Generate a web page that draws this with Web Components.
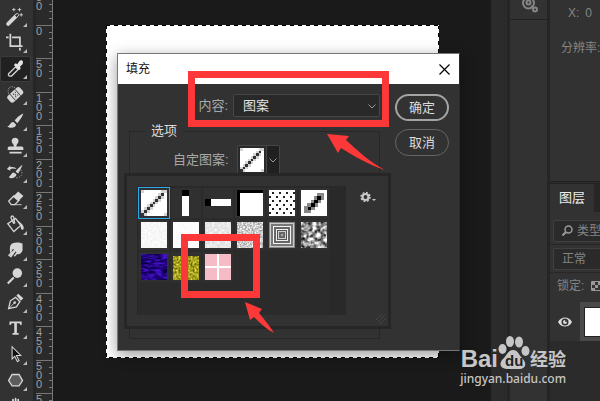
<!DOCTYPE html>
<html lang="zh-CN">
<head>
<meta charset="utf-8">
<title>填充</title>
<style>
    html, body {
        height: 100%;
        margin: 0;
        overflow: hidden;
    }

    body {
        background: #1a1a1a;
        color: #dcdcdc;
        font: 13px/16px "Liberation Sans", "Noto Sans CJK SC", sans-serif;
    }
</style>
</head>
<body>
<photo-editor></photo-editor>

<script>
    // Attach an open shadow root and fill it
    const render = (el, html) => {
        el.attachShadow({ mode: 'open' }).innerHTML = html;
    };

    const TOOLS = [
        ['魔棒', '<path d="M2.500 19.500 12 10" stroke="#d6d6d6" stroke-width="4.500" stroke-linecap="round"/><path d="m10 10 3-3 2 2-3 3z" fill="#323232" stroke="#d6d6d6"/><path d="M9 1v4M7 3h4M15.500 1v4M13.500 3h4M17.500 7v4M15.500 9h4" stroke="#d6d6d6"/>'],
        ['裁剪', '<path d="M0 5h3M5 1v14h14M7 5h9v9M16 17v3" stroke="#d6d6d6" stroke-width="2"/>'],
        ['吸管', '<path d="M3.500 19.500C2 18.500 3 16.500 4 16l7-7 3 3-7 7c-1 1-2 1-3.500.500z" stroke="#d6d6d6" stroke-width="1.500"/><path d="m9 7 2-2 2 1 2-3c2-3 6-1 4 3l-3 3 1 2-2 2z" fill="#e2e2e2"/>'],
        ['修复画笔', '<path d="M10 3C5 0 1 4 3 10" stroke="#d6d6d6" stroke-dasharray="1 1.500"/><g transform="rotate(-42 11 11)"><rect x="1" y="6" width="19" height="10" rx="3" fill="#d6d6d6"/><path d="M6.500 6v10M14.500 6v10" stroke="#323232"/><path d="M9 9h1M12 9h1M9 13h1M12 13h1M10 11h1" stroke="#323232" stroke-width="1.500"/></g>'],
        ['画笔', '<path d="M20 3c-3 1-8 5-10 8l3 3c3-3 6-8 7-11zM8.500 12.500c-4 0-3 4-7 5 3 3 10 2 10-2z" fill="#d6d6d6"/>'],
        ['仿制图章', '<path d="M8 8c-3-3-1-7 2.500-7s5.500 4 2.500 7c-1 1-1 2-1 3h6c2 0 2 1 2 4H2c0-3 0-4 2-4h5c0-1 0-2-1-3zM4 17h14v2H4z" fill="#d6d6d6"/>'],
        ['历史记录画笔', '<path d="M19 2c-3 2-6 5-8 8l3 2c2-3 4-7 5-10zM9 11c-3 0-3 4-6 5 3 3 9 1 9-3zM1 7l4-4v2c3-1 6 0 7 2-3-1-5-1-7 0v2z" fill="#d6d6d6"/><path d="M17 8c3 3 1 9-5 9" stroke="#d6d6d6" stroke-dasharray="1 2"/>'],
        ['橡皮擦', '<path d="m3 14 6-6 6 5-5 5H6z" stroke="#d6d6d6" stroke-width="1.500"/><path d="m8 9 6-6 6 5-6 6z" fill="#d6d6d6"/><path d="M9 18h9" stroke="#d6d6d6"/>'],
        ['油漆桶', '<path d="m2 10 9-6 6 8-8 7z" stroke="#d6d6d6" stroke-width="1.500"/><path d="M9 10 6 4c-1-3 2-4 3-1l1 7" stroke="#d6d6d6" stroke-width="1.500"/><path d="m12 5 6 5c3 3 3 7 1 7s-2-2-2-5z" fill="#d6d6d6"/>'],
        ['涂抹', '<path d="M5 14c-1-4-1-9 2-11 5-2 9-1 12 0v8c-1 3-4 5-6 4l-3 3-1-1 3-4-1-1-5 7-2-1 5-8-1-1z" fill="#d6d6d6"/><path d="m8 12-5 5" stroke="#d6d6d6" stroke-width="2"/>'],
        ['减淡', '<circle cx="13" cy="7" r="5.500" fill="#d6d6d6"/><path d="m9 12-7 7" stroke="#d6d6d6" stroke-width="2.500"/>'],
        ['钢笔', '<path d="m3 18 2-9 6-4 5 5-4 6z" stroke="#d6d6d6" stroke-width="1.500"/><path d="m3 18 7-7" stroke="#d6d6d6"/><circle cx="10" cy="11" r="1.500" fill="#d6d6d6"/><path d="m12 3 2-2 6 5-3 3z" fill="#d6d6d6"/>'],
        ['文字', '<path d="M4 3h14v4h-1.500l-1-2h-3v11h2v2H7.500v-2h2V5h-3l-1 2H4z" fill="#d6d6d6"/>'],
        ['路径选择', '<path d="M7 2v14l3-3 3 6 2-1-3-6h5z" fill="#111" stroke="#d6d6d6" stroke-width="1.200"/>'],
        ['多边形', '<path d="M7 4h8l4 7-4 6H7l-4-6z" fill="#5c5c5c" stroke="#d6d6d6" stroke-width="1.500"/>'],
        ['抓手', '<path d="M5 7v6M8 3v10M11 2v11M14 3v10M17 6v7" stroke="#d6d6d6" stroke-width="2" stroke-linecap="round"/>'],
    ];

    // Grainy swatch made from turbulence; slope and shift set its contrast per channel
    const grain = (id, freq, slope, shift) => `
        <filter id="${id}" x="0" y="0" width="1" height="1" color-interpolation-filters="sRGB">
            <feTurbulence type="fractalNoise" baseFrequency="${freq}" numOctaves="2" seed="4"/>
            <feColorMatrix values="${slope.map((s, i) => `${s} 0 0 0 ${shift[i]}`).join(' ')} 0 0 0 0 1"/>
        </filter>
        <rect width="26" height="26" filter="url(#${id})"/>`;

    // Unit squares at the given [x, y] places
    const cells = (places, fill) => `<path fill="${fill}" d="${places.map(([x, y]) => `M${x} ${y}h1v1h-1z`).join('')}"/>`;
    const STEPS = [0, 1, 2, 3, 4, 5, 6, 7];

    const PATTERNS = {
        diagonal: [9, `<path d="M0 0h9v9H0z" fill="#fff"/>${
            cells([[0, 0], [8, 0], [8, 8], ...STEPS.map(i => [i, 7 - i]), ...STEPS.slice(1).map(i => [i, 9 - i])], '#d4d4d4')}${
            cells(STEPS.map(i => [i, 8 - i]), '#333')}`],
        column: [26, '<path d="M9 0h7v6H9z" fill="#000"/><path d="M9 6h7v20H9z" fill="#fff"/>'],
        row: [26, '<path d="M0 9h6v7H0z" fill="#000"/><path d="M6 9h20v7H6z" fill="#fff"/>'],
        corner: [26, '<path d="M0 0h26v26H0z" fill="#000"/><path d="M3 3h23v23H3z" fill="#fff"/>'],
        dots: [26, `<path d="M0 0h26v26H0z" fill="#fff"/><path fill="#222" d="${
            [2, 6, 10, 14, 18, 22].map((y, r) => [2, 9, 16, 23].map(x => `M${x + (r % 2 ? -2 : 1)} ${y}h2v2h-2z`).join('')).join('')}"/>`],
        stroke: [26, '<path d="M0 0h26v26H0z" fill="#fff"/><path d="M16 3h7v7h-3v3h-3v4h-3v3h-4v3H3v-7h3v-3h4v-3h3V6h3z" fill="#888"/><path d="M16 6h4v4h-3v3h-3v4h-4v3H7v-3h3v-4h3v-3h3z" fill="#000"/>'],
        paper: [26, grain('g', '.5', [.12, .12, .12], [.91, .91, .91])],
        rice: [26, grain('g', '.8', [.08, .08, .08], [.95, .95, .95])],
        felt: [26, grain('g', '.4', [.2, .2, .2], [.81, .81, .81])],
        stone: [26, grain('g', '.6', [.8, .8, .8], [.4, .4, .4])],
        rings: [26, `<path d="M0 0h26v26H0z" fill="#888"/>${
            [['#ccc', 1], ['#777', 2], ['#f4f4f4', 4], ['#666', 5], ['#eee', 7], ['#555', 8], ['#ccc', 9], ['#666', 10], ['#aaa', 12]]
                .map(([c, n]) => `<rect x="${n}" y="${n}" width="${26 - 2 * n}" height="${26 - 2 * n}" fill="${c}"/>`).join('')}`],
        lace: [26, grain('g', '.25', [1.7, 1.7, 1.7], [-.25, -.25, -.25])],
        violet: [26, grain('g', '.14 .45', [.5, .2, 1.1], [-.1, -.08, -.02])],
        moss: [26, '<svg y="2" width="26" height="21">' + grain('g', '.5', [1, 1, .4], [.15, .13, -.08]) + '</svg>'],
        tiles: [26, '<path d="M0 0h26v26H0z" fill="#f5bcc8"/><path d="M12 0h2v26h-2zM0 12h26v2H0z" fill="#fff"/>'],
    };

    class PhotoEditor extends HTMLElement {
        connectedCallback() {
            render(this, `
                <style>
                    :host {
                        display: grid;
                        grid-template-columns: auto auto 1fr auto;
                        height: 100%;
                        overflow: hidden;
                        position: relative;
                    }
                    work-area, tool-bar, side-ruler, side-panels { min-height: 0; }
                    /* Site mark over the lower right corner */
                    site-mark { position: absolute; right: 34px; bottom: 14px; }
                    red-marks { position: absolute; inset: 0; pointer-events: none; }
                </style>
                <tool-bar></tool-bar>
                <side-ruler></side-ruler>
                <work-area><fill-dialog></fill-dialog></work-area>
                <side-panels></side-panels>
                <red-marks></red-marks>
                <site-mark></site-mark>
            `);
        }
    }

    class ToolBar extends HTMLElement {
        connectedCallback() {
            render(this, `
                <style>
                    :host {
                        display: flex;
                        flex-direction: column;
                        width: 33px;
                        padding-top: 4px;
                        background: #323232;
                        border-right: 3px solid #262626;
                        overflow: hidden;
                    }
                    button {
                        flex: none;
                        width: 31px;
                        height: 26px;
                        padding: 0 0 0 4px;
                        border: 1px solid transparent;
                        border-radius: 2px;
                        background: none;
                    }
                    button[aria-pressed="true"] { background: #212121; border-color: #3c3c3c; }
                    svg { display: block; fill: none; }
                </style>
                ${TOOLS.map(([name, art], i) => `
                    <button type="button" aria-label="${name}" aria-pressed="${i === 2}">
                        <svg width="24" height="24"><g transform="translate(1 2) scale(.87)">${art}</g><path d="M22 18v4h-4z" fill="#bbb"/></svg>
                    </button>`).join('')}
            `);
        }
    }

    class SideRuler extends HTMLElement {
        connectedCallback() {
            const labels = ['50', '0', '50', '100', '150', '200', '250', '300', '350', '400', '450', '500', '550'];
            render(this, `
                <style>
                    :host {
                        display: block;
                        width: 16px;
                        background: #2a2a2a;
                        border-right: 1px solid #777;
                        overflow: hidden;
                    }
                    ol { list-style: none; margin: -9px 0 0; padding: 0; }
                    li {
                        display: flex;
                        justify-content: space-between;
                        height: 33px;
                        box-sizing: border-box;
                        border-top: 1px solid #777;
                        font: 11px/9px "Liberation Sans", sans-serif;
                        color: #a0a0a0;
                    }
                    li:nth-child(odd) { height: 34px; }
                    span { width: 7px; padding-top: 1px; word-break: break-all; }
                    svg { flex: none; }
                </style>
                <ol>${labels.map(l => `
                    <li><span>${l}</span><svg width="3" height="32"><path d="M0 6.500h3M0 12.500h3M0 19.500h3M0 26.500h3" stroke="#777"/></svg></li>`).join('')}
                </ol>
            `);
        }
    }

    class WorkArea extends HTMLElement {
        connectedCallback() {
            render(this, `
                <style>
                    :host {
                        display: block;
                        position: relative;
                        box-sizing: border-box;
                        padding: 25px 52px 43px 53px;
                        background: #1a1a1a;
                    }
                    /* Marching ants run round the whole page */
                    .page {
                        height: 100%;
                        background:
                            repeating-linear-gradient(90deg, #000 0 4px, #fff 4px 8px) 0 0 / 100% 1px no-repeat,
                            repeating-linear-gradient(90deg, #fff 0 3px, #000 3px 7px, #fff 7px 8px) 0 100% / 100% 1px no-repeat,
                            repeating-linear-gradient(#000 0 4px, #fff 4px 8px) 0 0 / 1px 100% no-repeat,
                            repeating-linear-gradient(#000 0 4px, #fff 4px 8px) 100% 0 / 1px 100% no-repeat,
                            #fff;
                    }
                    ::slotted(fill-dialog) { position: absolute; left: 64px; top: 53px; }
                </style>
                <div class="page"></div>
                <slot></slot>
            `);
        }
    }

    class PatternSwatch extends HTMLElement {
        connectedCallback() {
            const [size, art] = PATTERNS[this.getAttribute('name')];
            render(this, `
                <style>
                    :host { display: block; width: 26px; height: 26px; }
                    svg { display: block; width: 100%; height: 100%; }
                </style>
                <svg viewBox="0 0 ${size} ${size}" shape-rendering="crispEdges">${art}</svg>
            `);
        }
    }

    class PatternPicker extends HTMLElement {
        connectedCallback() {
            render(this, `
                <style>
                    :host {
                        display: flex;
                        justify-content: space-between;
                        align-items: flex-start;
                        box-sizing: border-box;
                        padding: 11px 12px 11px 11px;
                        background: #323232;
                        border: 3px solid #262626;
                    }
                    .list {
                        display: grid;
                        grid-template-columns: repeat(6, 32px);
                        grid-auto-rows: 32px;
                        align-content: start;
                        height: 128px;
                        border-right: 16px solid #292929;
                        background: #2b2b2b;
                        box-shadow: 0 -1px #282828, -1px 0 #282828;
                    }
                    .list button {
                        padding: 2px;
                        border: 1px solid transparent;
                        background: #303030 padding-box;
                    }
                    .list button[aria-pressed="true"] { border-color: #2eaae8; }
                    .gear { margin-top: 4px; padding: 0; border: 0; background: none; }
                    svg { display: block; }
                    /* Resize grip in the corner */
                    .grip { position: absolute; right: 1px; bottom: 1px; }
                </style>
                <div class="list">
                    ${Object.keys(PATTERNS).map((name, i) => `
                        <button type="button" aria-label="${name}" aria-pressed="${i === 0}"><pattern-swatch name="${name}"></pattern-swatch></button>`).join('')}
                </div>
                <button class="gear" type="button" aria-label="菜单">
                    <svg width="16" height="12" viewBox="0 0 16 12"><circle cx="5.500" cy="6" r="3" fill="none" stroke="#c8c8c8" stroke-width="2.200"/><circle cx="5.500" cy="6" r="4.500" fill="none" stroke="#c8c8c8" stroke-width="1.500" stroke-dasharray="1.800 1.730"/><path d="M12 8h4l-2 2z" fill="#c8c8c8"/></svg>
                </button>
                <svg class="grip" width="12" height="12"><path d="m1 7 6-6M3 9l7-7M5 11l6-6" stroke="#555" stroke-dasharray="1 1"/></svg>
            `);
        }
    }

    class PillButton extends HTMLElement {
        connectedCallback() {
            render(this, `
                <style>
                    :host { display: block; }
                    button {
                        display: block;
                        width: 54px;
                        height: 27px;
                        padding: 0;
                        border: 1px solid #666;
                        border-radius: 14px;
                        background: #323232;
                        color: #dcdcdc;
                        font: inherit;
                    }
                    :host([primary]) button { border: 2px solid #a4a4a4; }
                </style>
                <button type="button"><slot></slot></button>
            `);
        }
    }

    class FillDialog extends HTMLElement {
        connectedCallback() {
            render(this, `
                <style>
                    :host {
                        display: block;
                        box-sizing: border-box;
                        width: 343px;
                        border: 1px solid #777;
                        border-right-color: #2a2a2a;
                        background: #323232;
                        box-shadow: 0 4px 14px rgba(0, 0, 0, .4);
                    }
                    header {
                        display: flex;
                        align-items: center;
                        justify-content: space-between;
                        height: 30px;
                        padding: 0 9px 0 8px;
                        background: #fff;
                        color: #111;
                    }
                    h1 { margin: 0; font: inherit; font-size: 12px; }
                    .close { padding: 0; border: 0; background: none; }
                    svg { display: block; }
                    .body {
                        display: grid;
                        grid-template-columns: 1fr auto;
                        padding: 10px 10px 11px 6px;
                    }
                    .buttons {
                        grid-area: 1 / 2 / 3 / 3;
                        display: flex;
                        flex-direction: column;
                        gap: 8px;
                    }
                    .content {
                        display: flex;
                        align-items: center;
                        justify-content: flex-end;
                        gap: 5px;
                        margin-right: 15px;
                    }
                    .content, .custom { color: #a8a8a8; }
                    .drop { position: relative; }
                    select {
                        appearance: none;
                        display: block;
                        width: 147px;
                        height: 23px;
                        padding: 0 9px;
                        border: 1px solid #464646;
                        border-radius: 2px;
                        background: #292929;
                        color: #e0e0e0;
                        font: inherit;
                    }
                    .drop svg { position: absolute; right: 4px; top: 10px; pointer-events: none; }
                    fieldset {
                        min-width: 0;
                        height: 216px;
                        box-sizing: border-box;
                        margin: 6px 15px 0 5px;
                        padding: 6px 0 0;
                        border: 1px solid #272727;
                    }
                    legend { margin-left: 15px; padding: 0 6px; }
                    .custom { display: flex; align-items: center; margin-left: 43px; gap: 8px; }
                    .swatch {
                        display: flex;
                        align-items: stretch;
                        padding: 0;
                        border: 1px solid #464646;
                        border-radius: 2px;
                        background: #292929;
                    }
                    .swatch pattern-swatch { width: 24px; height: 24px; padding: 2px; }
                    .arrow { display: flex; align-items: center; padding: 0 2px; border-left: 1px solid #464646; background: #202020; }
                    /* The picker drops down over the options group */
                    pattern-picker { position: absolute; left: 6px; top: 119px; width: 267px; }
                </style>
                <header>
                    <h1>填充</h1>
                    <button class="close" type="button" aria-label="关闭">
                        <svg width="11" height="11"><path d="m.5.500 10 10M10.500.500l-10 10" stroke="#000" stroke-width="1.200"/></svg>
                    </button>
                </header>
                <div class="body">
                    <div class="content">
                        <label for="content">内容:</label>
                        <span class="drop">
                            <select id="content"><option>图案</option></select>
                            <svg width="8" height="5"><path d="m.5.500 3.500 3.500L7.500.500" fill="none" stroke="#999"/></svg>
                        </span>
                    </div>
                    <div class="buttons">
                        <pill-button primary>确定</pill-button>
                        <pill-button>取消</pill-button>
                    </div>
                    <fieldset>
                        <legend>选项</legend>
                        <div class="custom">
                            <label for="custom">自定图案:</label>
                            <button class="swatch" id="custom" type="button">
                                <pattern-swatch name="diagonal"></pattern-swatch>
                                <span class="arrow"><svg width="8" height="5"><path d="m.5.500 3.500 3.500L7.500.500" fill="none" stroke="#999"/></svg></span>
                            </button>
                        </div>
                    </fieldset>
                </div>
                <pattern-picker></pattern-picker>
            `);
        }
    }

    class SidePanels extends HTMLElement {
        connectedCallback() {
            render(this, `
                <style>
                    :host {
                        display: grid;
                        grid-template-columns: 16px 37px 50px;
                        column-gap: 3px;
                        background: #252525;
                    }
                    .gutter { background: #2b2b2b; }
                    .strip { background: #323232; }
                    .strip div { height: 19px; padding-left: 10px; border-bottom: 1px solid #222; }
                    .gutter, .strip, .panel { min-width: 0; overflow: hidden; white-space: nowrap; }
                    svg { display: block; flex: none; }
                    .panel { color: #858585; background: #2b2b2b; }
                    .info { height: 182px; box-sizing: border-box; padding-top: 5px; background: #323232; border-bottom: 1px solid #222; }
                    .info p { margin: 0; padding-left: 11px; font-size: 12px; }
                    .info .pos { padding-left: 18px; display: flex; gap: 6px; }
                    .info .res { margin-top: 19px; }
                    .tabs { display: flex; margin-top: 1px; border-top: 1px solid #222; background: #262626; }
                    .tabs button { width: 44px; height: 28px; padding: 0; border: 0; background: #323232; color: #eee; font: inherit; }
                    .row { display: flex; align-items: center; height: 28px; box-sizing: border-box; background: #323232; border-bottom: 1px solid #272727; }
                    .filter { height: 33px; padding-top: 6px; }
                    .field {
                        display: flex;
                        align-items: center;
                        gap: 4px;
                        width: 70px;
                        height: 22px;
                        box-sizing: border-box;
                        flex: none;
                        margin-left: 3px;
                        padding-left: 8px;
                        border: 1px solid #404040;
                        border-radius: 2px;
                        background: #2a2a2a;
                    }
                    select { appearance: none; padding: 0; border: 0; background: none; color: inherit; font: inherit; font-size: 12px; }
                    .lock { height: 29px; padding: 0 0 4px 7px; gap: 7px; border: 0; font-size: 12px; }
                    .layer { display: flex; height: 39px; background: #323232; }
                    .eye { flex: none; width: 30px; padding: 0; border: 0; background: none; display: grid; place-items: center; }
                    .thumb { flex: none; padding: 5px 0 4px 4px; background: #4a4a4a; }
                    .thumb div { width: 40px; height: 28px; border: 1px solid #222; background: #fff; }
                </style>
                <div class="gutter"></div>
                <div class="strip"><div><svg width="18" height="13" viewBox="0 0 18 13" fill="none" stroke="#858585" stroke-width="2"><circle cx="8.500" cy="3" r="5.500"/><circle cx="8.500" cy="2.500" r="2"/><path d="m11 6 3 3"/><circle cx="15" cy="9.500" r="2" fill="#323232"/></svg></div></div>
                <div class="panel">
                    <div class="info">
                        <p class="pos"><span>X:</span><span>0</span></p>
                        <p class="res">分辨率:</p>
                    </div>
                    <div class="tabs"><button type="button">图层</button></div>
                    <div class="row filter"><span class="field">
                        <svg width="11" height="12" fill="none" stroke="#999" stroke-width="1.500"><circle cx="6.500" cy="4.500" r="3.500"/><path d="m4 7-3.500 3.500" stroke-width="2"/></svg>
                        <select aria-label="类型"><option>类型</option></select>
                    </span></div>
                    <div class="row"><span class="field"><select aria-label="模式"><option>正常</option></select></span></div>
                    <div class="row lock"><span>锁定:</span><svg width="10" height="10"><path d="M.5.500h9v9h-9z" fill="#333" stroke="#999"/><path d="M1 1h3v3H1zM4 4h3v3H4zM1 7h3v2H1zM7 1h2v3H7z" fill="#999"/></svg></div>
                    <div class="layer">
                        <button class="eye" type="button" aria-label="显示图层"><svg width="14" height="10"><path d="M0 5c3-6 11-6 14 0-3 6-11 6-14 0z" fill="#dcdcdc"/><circle cx="7" cy="5" r="3.500" fill="#323232"/><circle cx="7" cy="5" r="2" fill="#dcdcdc"/><circle cx="8" cy="4" r="1" fill="#323232"/></svg></button>
                        <div class="thumb"><div></div></div>
                    </div>
                </div>
            `);
        }
    }

    // Red frames and arrows that point at the controls to use
    class RedMarks extends HTMLElement {
        connectedCallback() {
            render(this, `
                <style>
                    :host { display: block; }
                    svg { display: block; }
                </style>
                <svg width="600" height="401" fill="#fc3838">
                    <path d="M191.500 74.500h194v49h-194zM184.500 237.500h72v57h-72z" fill="none" stroke="#fc3838" stroke-width="7"/>
                    <path d="m327 134 22 2-3 4c10 9 22 21 39 30-18-6-31-14-44-22l-3 5zM245 302l17 7-3 4c5 6 11 13 15 20-8-4-14-10-20-16l-4 3z"/>
                </svg>
            `);
        }
    }

    class SiteMark extends HTMLElement {
        connectedCallback() {
            render(this, `
                <style>
                    :host { display: block; color: #c6c6c6; }
                    .logo { display: flex; align-items: flex-end; justify-content: flex-end; height: 34px; font-weight: bold; }
                    .bai { font-size: 24px; line-height: 24px; }
                    .name { font-size: 18px; line-height: 22px; }
                    svg { display: block; margin: 0 0 1px; }
                    a { display: block; color: inherit; text-align: right; text-decoration: none; font: 500 12px/16px "Noto Sans", sans-serif; }
                </style>
                <div class="logo">
                    <span class="bai">Bai</span>
                    <svg width="32" height="34" viewBox="0 0 32 34" fill="#c6c6c6">
                        <ellipse cx="4.500" cy="13" rx="4" ry="5"/>
                        <ellipse cx="12" cy="5.500" rx="4" ry="5.500"/>
                        <ellipse cx="21" cy="6" rx="4" ry="5.500"/>
                        <ellipse cx="27.500" cy="15" rx="4" ry="5"/>
                        <path d="M15 14c5 0 6 5 9 8 6 6 3 11-3 11H9c-7 0-9-6-3-11 3-3 4-8 9-8z"/>
                        <text x="7" y="30" font-size="15" fill="#222">du</text>
                    </svg>
                    <span class="name">经验</span>
                </div>
                <a href="#">jingyan.baidu.com</a>
            `);
        }
    }

    customElements.define('pattern-swatch', PatternSwatch);
    customElements.define('pattern-picker', PatternPicker);
    customElements.define('pill-button', PillButton);
    customElements.define('fill-dialog', FillDialog);
    customElements.define('tool-bar', ToolBar);
    customElements.define('side-ruler', SideRuler);
    customElements.define('work-area', WorkArea);
    customElements.define('side-panels', SidePanels);
    customElements.define('red-marks', RedMarks);
    customElements.define('site-mark', SiteMark);
    customElements.define('photo-editor', PhotoEditor);
</script>
</body>
</html>
